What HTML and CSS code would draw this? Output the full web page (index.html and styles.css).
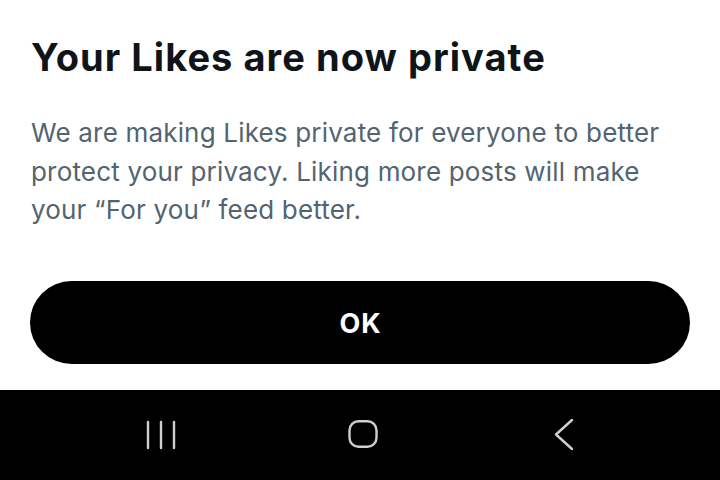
FILE: index.html
```html
<!DOCTYPE html>
<html>
<head>
<meta charset="utf-8">
<link rel="stylesheet" href="styles.css">
</head>
<body>
<div class="screen">
  <main class="sheet">
    <h1 class="title">Your Likes are now private</h1>
    <p class="body">We are making Likes private for everyone to better protect your privacy. Liking more posts will make your “For you” feed better.</p>
    <button class="ok">OK</button>
  </main>
  <nav class="navbar">
    <svg class="icon" width="40" height="40" viewBox="0 0 40 40">
      <g stroke="#cfcfcf" stroke-width="2.4" stroke-linecap="round">
        <line x1="7" y1="7" x2="7" y2="33"/>
        <line x1="20" y1="7" x2="20" y2="33"/>
        <line x1="33" y1="7" x2="33" y2="33"/>
      </g>
    </svg>
    <svg class="icon" width="40" height="40" viewBox="0 0 40 40">
      <rect x="6.5" y="6.2" width="27" height="25.6" rx="9" fill="none" stroke="#cfcfcf" stroke-width="2.4"/>
    </svg>
    <svg class="icon" width="40" height="40" viewBox="0 0 40 40">
      <polyline points="28,5 12,19.5 28,34" fill="none" stroke="#cfcfcf" stroke-width="2.4" stroke-linecap="round" stroke-linejoin="round"/>
    </svg>
  </nav>
</div>
</body>
</html>
```

FILE: styles.css
```css
html, body {
  margin: 0;
  padding: 0;
  background: #fff;
}
.screen {
  width: 720px;
  height: 480px;
  display: flex;
  flex-direction: column;
  overflow: hidden;
}
.sheet {
  flex: 1;
  display: flex;
  flex-direction: column;
  padding: 0 30px;
  font-family: Inter, "Noto Sans", sans-serif;
}
.title {
  margin: 34px 0 0 1px;
  font-size: 38px;
  line-height: 46px;
  font-weight: 700;
  color: #0f1419;
  letter-spacing: 1.05px;
}
.body {
  margin: 34px 0 0 1px;
  font-size: 26px;
  line-height: 38.5px;
  font-weight: 400;
  color: #536471;
  letter-spacing: 0.18px;
}
.ok {
  margin-top: 51px;
  height: 83px;
  width: 100%;
  border: none;
  border-radius: 42px;
  background: #000;
  color: #fff;
  font-family: Inter, "Noto Sans", sans-serif;
  font-weight: 700;
  font-size: 27px;
  letter-spacing: 1px;
  text-indent: 1px;
  padding: 3px 0 0 0;
}
.navbar {
  height: 90px;
  background: #000;
  display: flex;
  justify-content: space-between;
  align-items: center;
  padding: 0 136px 0 141px;
}
.icon {
  display: block;
}
```
